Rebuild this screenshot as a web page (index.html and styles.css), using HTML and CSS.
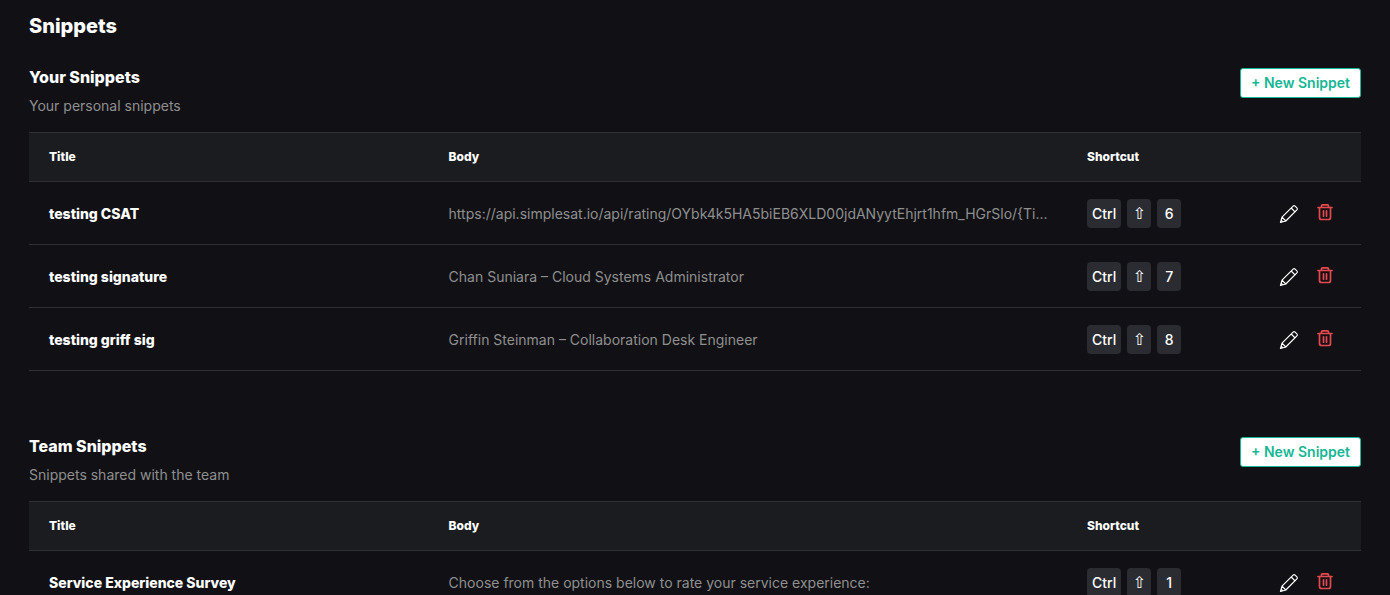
FILE: index.html
```html
<!DOCTYPE html>
<html lang="en">

<head>
    <meta charset="UTF-8">
    <meta name="viewport" content="width=device-width, initial-scale=1.0">
    <title>Snippets</title>
    <link rel="stylesheet" href="styles.css">
</head>

<body>

    <!-- shared icons -->
    <svg class="sprite" aria-hidden="true">
        <symbol id="icon-edit" viewBox="0 0 20 20">
            <path d="M1.5 18.5 L3 13.2 L14.1 2.1 Q15.1 1.1 16.1 2.1 L17.9 3.9 Q18.9 4.9 17.9 5.9 L6.8 17 Z M3 13.2 L6.8 17 M12.2 4 L16 7.8 M1.5 18.5 L2.2 16.2 L3.8 17.8 Z" />
        </symbol>
        <symbol id="icon-delete" viewBox="0 0 16 18">
            <path d="M1 3.5 H15 M4.5 3.5 V2 Q4.5 0.8 5.7 0.8 H10.3 Q11.5 0.8 11.5 2 V3.5 M2.5 3.5 V13.5 Q2.5 15.5 4.5 15.5 H11.5 Q13.5 15.5 13.5 13.5 V3.5 M6.5 6.8 V12.2 M9.5 6.8 V12.2" />
        </symbol>
    </svg>

    <main class="page">
        <h1>Snippets</h1>

        <section class="snippets">
            <div class="section-header">
                <div>
                    <h2>Your Snippets</h2>
                    <p>Your personal snippets</p>
                </div>
                <button class="new-button" type="button">+ New Snippet</button>
            </div>
            <table>
                <thead>
                    <tr>
                        <th class="col-title">Title</th>
                        <th>Body</th>
                        <th class="col-shortcut">Shortcut</th>
                        <td class="col-actions"></td>
                    </tr>
                </thead>
                <tbody>
                    <tr>
                        <th scope="row">testing CSAT</th>
                        <td class="body-text">https://api.simplesat.io/api/rating/OYbk4k5HA5biEB6XLD00jdANyytEhjrt1hfm_HGrSlo/{Ti...</td>
                        <td class="shortcut"><div class="keys"><kbd>Ctrl</kbd><kbd class="shift">⇧</kbd><kbd>6</kbd></div></td>
                        <td>
                            <div class="actions">
                                <button type="button" class="edit" aria-label="Edit"><svg><use href="#icon-edit" /></svg></button>
                                <button type="button" class="delete" aria-label="Delete"><svg><use href="#icon-delete" /></svg></button>
                            </div>
                        </td>
                    </tr>
                    <tr>
                        <th scope="row">testing signature</th>
                        <td class="body-text">Chan Suniara – Cloud Systems Administrator</td>
                        <td class="shortcut"><div class="keys"><kbd>Ctrl</kbd><kbd class="shift">⇧</kbd><kbd>7</kbd></div></td>
                        <td>
                            <div class="actions">
                                <button type="button" class="edit" aria-label="Edit"><svg><use href="#icon-edit" /></svg></button>
                                <button type="button" class="delete" aria-label="Delete"><svg><use href="#icon-delete" /></svg></button>
                            </div>
                        </td>
                    </tr>
                    <tr>
                        <th scope="row">testing griff sig</th>
                        <td class="body-text">Griffin Steinman – Collaboration Desk Engineer</td>
                        <td class="shortcut"><div class="keys"><kbd>Ctrl</kbd><kbd class="shift">⇧</kbd><kbd>8</kbd></div></td>
                        <td>
                            <div class="actions">
                                <button type="button" class="edit" aria-label="Edit"><svg><use href="#icon-edit" /></svg></button>
                                <button type="button" class="delete" aria-label="Delete"><svg><use href="#icon-delete" /></svg></button>
                            </div>
                        </td>
                    </tr>
                </tbody>
            </table>
        </section>

        <section class="snippets">
            <div class="section-header">
                <div>
                    <h2>Team Snippets</h2>
                    <p>Snippets shared with the team</p>
                </div>
                <button class="new-button" type="button">+ New Snippet</button>
            </div>
            <table>
                <thead>
                    <tr>
                        <th class="col-title">Title</th>
                        <th>Body</th>
                        <th class="col-shortcut">Shortcut</th>
                        <td class="col-actions"></td>
                    </tr>
                </thead>
                <tbody>
                    <tr>
                        <th scope="row">Service Experience Survey</th>
                        <td class="body-text">Choose from the options below to rate your service experience:</td>
                        <td class="shortcut"><div class="keys"><kbd>Ctrl</kbd><kbd class="shift">⇧</kbd><kbd>1</kbd></div></td>
                        <td>
                            <div class="actions">
                                <button type="button" class="edit" aria-label="Edit"><svg><use href="#icon-edit" /></svg></button>
                                <button type="button" class="delete" aria-label="Delete"><svg><use href="#icon-delete" /></svg></button>
                            </div>
                        </td>
                    </tr>
                </tbody>
            </table>
        </section>
    </main>

</body>

</html>
```
FILE: styles.css
```css
* {
    box-sizing: border-box;
}

body {
    margin: 0;
    background-color: #111115;
    color: #fff;
    font-family: Inter, "Liberation Sans", sans-serif;
    font-size: 14px;
    line-height: 20px;
}

.sprite {
    display: none;
}

.page {
    height: 100vh;
    overflow: hidden;
    padding: 12px 29px 0;
}

h1,
h2,
p {
    margin: 0;
}

h1,
h2,
th {
    font-weight: 800;
}

h1 {
    margin-bottom: 27px;
    font-size: 20px;
    line-height: 28px;
}

h2 {
    margin-bottom: 9px;
    font-size: 16px;
    line-height: 20px;
}

p {
    color: #8f8f8f;
}

.snippets {
    margin-bottom: 65px;
}

.section-header {
    display: flex;
    justify-content: space-between;
    align-items: flex-start;
    padding-bottom: 16px;
}

.new-button {
    height: 30px;
    margin-top: 1px;
    padding: 0 10px 1px;
    border: 1px solid #15b795;
    border-radius: 3px;
    background-color: #fff;
    color: #15b795;
    font: 600 14px Inter, "Liberation Sans", sans-serif;
    cursor: pointer;
}

table {
    width: 100%;
    table-layout: fixed;
    border-spacing: 0;
    border-top: 1px solid #2e3033;
}

th,
td {
    height: 63px;
    padding: 2px 20px 0;
    border-bottom: 1px solid #2e3033;
    text-align: left;
}

thead th,
thead td {
    height: 49px;
    padding-top: 0;
    background-color: #1b1c1f;
    font-size: 12px;
}

.col-title {
    width: 30%;
}

.col-shortcut {
    width: 174px;
}

.col-actions {
    width: 120px;
}

.body-text {
    overflow: hidden;
    padding-right: 16px;
    color: #8f8f8f;
    text-overflow: ellipsis;
    white-space: nowrap;
}

.shortcut {
    padding-top: 0;
}

.keys {
    display: flex;
    gap: 6px;
}

kbd {
    min-width: 24px;
    height: 29px;
    padding: 5px 5px 4px;
    border-radius: 4px;
    background-color: #2b2c31;
    font-family: Inter, "Liberation Sans", sans-serif;
    font-weight: 500;
    text-align: center;
}

.shift {
    font-family: "DejaVu Sans", sans-serif;
    font-size: 16px;
}

.actions {
    display: flex;
    justify-content: flex-end;
    align-items: flex-start;
    gap: 18px;
    padding-right: 8px;
}

.actions button {
    padding: 0;
    border: 0;
    background: none;
    cursor: pointer;
}

.actions svg {
    display: block;
    width: 20px;
    height: 20px;
    fill: none;
    stroke: currentColor;
    stroke-width: 1.2;
    stroke-linecap: round;
    stroke-linejoin: round;
}

.actions .edit {
    color: #fff;
}

.actions .delete {
    color: #e5484d;
}

.actions .delete svg {
    width: 16px;
    height: 18px;
    stroke-width: 1.7;
}
```
